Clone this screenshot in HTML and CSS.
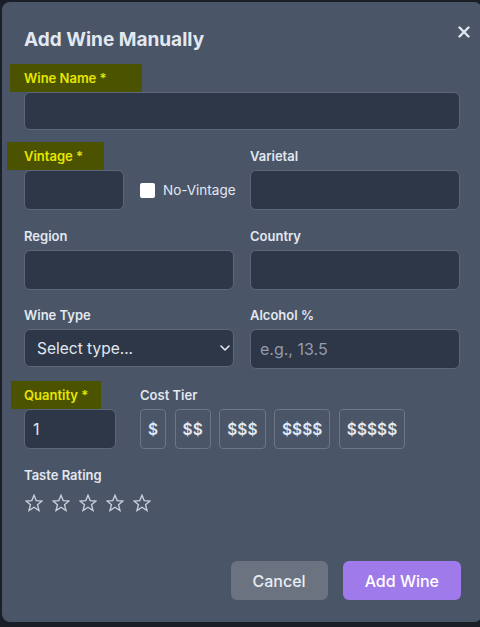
FILE: index.html
```html
<!DOCTYPE html>
<html lang="en">
<head>
<meta charset="utf-8">
<title>Add Wine Manually</title>
<link rel="stylesheet" href="styles.css">
</head>
<body>
<div class="dialog">
  <div class="header">
    <h2 class="title">Add Wine Manually</h2>
    <button class="close" aria-label="Close">
      <svg width="12" height="12" viewBox="0 0 12 12"><path d="M1.5 1.5L10.5 10.5M10.5 1.5L1.5 10.5" stroke="#e2e8f0" stroke-width="2.4" stroke-linecap="round"/></svg>
    </button>
  </div>
  <form class="grid">
    <div class="field span2">
      <label class="label"><span class="hl hl-name">Wine Name *</span></label>
      <input class="input h38" type="text">
    </div>
    <div class="field">
      <label class="label"><span class="hl hl-vintage">Vintage *</span></label>
      <div class="vintage-row">
        <input class="input vintage" type="text">
        <label class="check"><span class="box"></span>No-Vintage</label>
      </div>
    </div>
    <div class="field">
      <label class="label">Varietal</label>
      <input class="input" type="text">
    </div>
    <div class="field">
      <label class="label">Region</label>
      <input class="input" type="text">
    </div>
    <div class="field">
      <label class="label">Country</label>
      <input class="input" type="text">
    </div>
    <div class="field up1">
      <label class="label">Wine Type</label>
      <div class="select-wrap">
        <select class="input select h38"><option>Select type...</option></select>
        <svg class="chev" width="10" height="6" viewBox="0 0 10 6"><path d="M1 1l4 4 4-4" fill="none" stroke="#e2e8f0" stroke-width="1.6" stroke-linecap="round" stroke-linejoin="round"/></svg>
      </div>
    </div>
    <div class="field up1">
      <label class="label">Alcohol %</label>
      <input class="input" type="text" placeholder="e.g., 13.5">
    </div>
    <div class="field span2 qty-row">
      <div class="qty">
        <label class="label"><span class="hl hl-qty">Quantity *</span></label>
        <input class="input qty-input" type="text" value="1">
      </div>
      <div class="tier">
        <label class="label">Cost Tier</label>
        <div class="tiers">
          <button type="button" class="tier-btn">$</button>
          <button type="button" class="tier-btn">$$</button>
          <button type="button" class="tier-btn">$$$</button>
          <button type="button" class="tier-btn">$$$$</button>
          <button type="button" class="tier-btn">$$$$$</button>
        </div>
      </div>
    </div>
    <div class="field span2">
      <label class="label">Taste Rating</label>
      <div class="stars">
        <svg class="star" width="18" height="18" viewBox="0 0 18 18"><polygon points="9,1.2 11.2,6.6 17,7 12.5,10.7 14,16.5 9,13.3 4,16.5 5.5,10.7 1,7 6.8,6.6"/></svg>
        <svg class="star" width="18" height="18" viewBox="0 0 18 18"><polygon points="9,1.2 11.2,6.6 17,7 12.5,10.7 14,16.5 9,13.3 4,16.5 5.5,10.7 1,7 6.8,6.6"/></svg>
        <svg class="star" width="18" height="18" viewBox="0 0 18 18"><polygon points="9,1.2 11.2,6.6 17,7 12.5,10.7 14,16.5 9,13.3 4,16.5 5.5,10.7 1,7 6.8,6.6"/></svg>
        <svg class="star" width="18" height="18" viewBox="0 0 18 18"><polygon points="9,1.2 11.2,6.6 17,7 12.5,10.7 14,16.5 9,13.3 4,16.5 5.5,10.7 1,7 6.8,6.6"/></svg>
        <svg class="star" width="18" height="18" viewBox="0 0 18 18"><polygon points="9,1.2 11.2,6.6 17,7 12.5,10.7 14,16.5 9,13.3 4,16.5 5.5,10.7 1,7 6.8,6.6"/></svg>
      </div>
    </div>
  </form>
  <div class="footer">
    <button class="btn cancel">Cancel</button>
    <button class="btn primary">Add Wine</button>
  </div>
</div>
</body>
</html>
```
FILE: styles.css
```css
* { box-sizing: border-box; }
html, body { margin: 0; padding: 0; }
body {
  background: #1a1e27;
  width: 480px;
  height: 627px;
  overflow: hidden;
  font-family: Inter, "Liberation Sans", sans-serif;
  color: #e2e8f0;
  padding: 2px 0 0 2px;
}
.dialog {
  width: 480px;
  height: 620px;
  background: #4a5568;
  border-radius: 8px;
  padding: 24px 22px 22px 22px;
  display: flex;
  flex-direction: column;
}
.header {
  display: flex;
  justify-content: space-between;
  align-items: flex-start;
  margin-bottom: 14px;
}
.title {
  margin: 0;
  font-size: 19px;
  line-height: 28px;
  font-weight: 700;
  color: #e2e8f0;
}
.close {
  background: none;
  border: 0;
  padding: 0;
  margin: 0 -10px 0 0;
  width: 12px;
  height: 12px;
  display: flex;
}
.grid {
  display: grid;
  grid-template-columns: minmax(0, 1fr) minmax(0, 1fr);
  gap: 16px;
}
.span2 { grid-column: span 2; }
.field { display: flex; flex-direction: column; min-width: 0; }
.up1 { margin-top: -1px; }
.label {
  display: block;
  font-size: 13px;
  font-weight: 600;
  line-height: 20px;
  margin-bottom: 4px;
  color: #e2e8f0;
  white-space: nowrap;
}
.hl {
  background: #4b5300;
  color: #e6e600;
  padding: 6px 0;
}
.hl-name { margin-left: -14px; padding-left: 14px; padding-right: 35px; }
.hl-vintage { margin-left: -17px; padding-left: 17px; padding-right: 21px; }
.hl-qty { margin-left: -13px; padding-left: 13px; padding-right: 13px; }
.input {
  height: 40px;
  width: 100%;
  background: #2d3748;
  border: 1px solid #5c677a;
  border-radius: 6px;
  color: #e2e8f0;
  font-family: Inter, "Liberation Sans", sans-serif;
  font-size: 16px;
  padding: 0 9px;
  outline: none;
}
.h38 { height: 38px; }
.input::placeholder { color: #939cad; }
.vintage-row { display: flex; align-items: center; }
.vintage { width: 100px; flex: none; }
.check {
  display: flex;
  align-items: center;
  margin-left: 16px;
  font-size: 13.5px;
  color: #e2e8f0;
  white-space: nowrap;
}
.box {
  width: 15px;
  height: 15px;
  background: #fff;
  border-radius: 2px;
  margin-right: 8px;
  flex: none;
}
.select-wrap { position: relative; }
.select {
  appearance: none;
  -webkit-appearance: none;
  padding: 0 12px;
  font-size: 15.5px;
}
.chev { position: absolute; right: 4px; top: 16px; }
.qty-row { flex-direction: row; }
.qty-input { width: 92px; padding: 0 8px; }
.tier { margin-left: 24px; }
.tiers { display: flex; gap: 8.5px; }
.tier-btn {
  height: 40px;
  background: transparent;
  border: 1px solid #6b7688;
  border-radius: 4px;
  color: #e2e8f0;
  font-family: Inter, "Liberation Sans", sans-serif;
  font-size: 15.5px;
  font-weight: 600;
  padding: 0 7px;
}
.stars {
  display: flex;
  gap: 9px;
  padding-top: 5px;
  padding-left: 1px;
}
.star {
  fill: none;
  stroke: #cbd2dc;
  stroke-width: 1.3;
  stroke-linejoin: miter;
}
.footer {
  margin-top: auto;
  display: flex;
  justify-content: flex-end;
  gap: 15px;
  margin-right: -1px;
}
.btn {
  height: 39px;
  border: 0;
  border-radius: 6px;
  font-family: Inter, "Liberation Sans", sans-serif;
  font-size: 16px;
  font-weight: 500;
  color: #e9edf2;
  padding: 0 22px;
}
.cancel { background: #6b7280; }
.primary { background: #9f7aea; color: #fff; }
```
